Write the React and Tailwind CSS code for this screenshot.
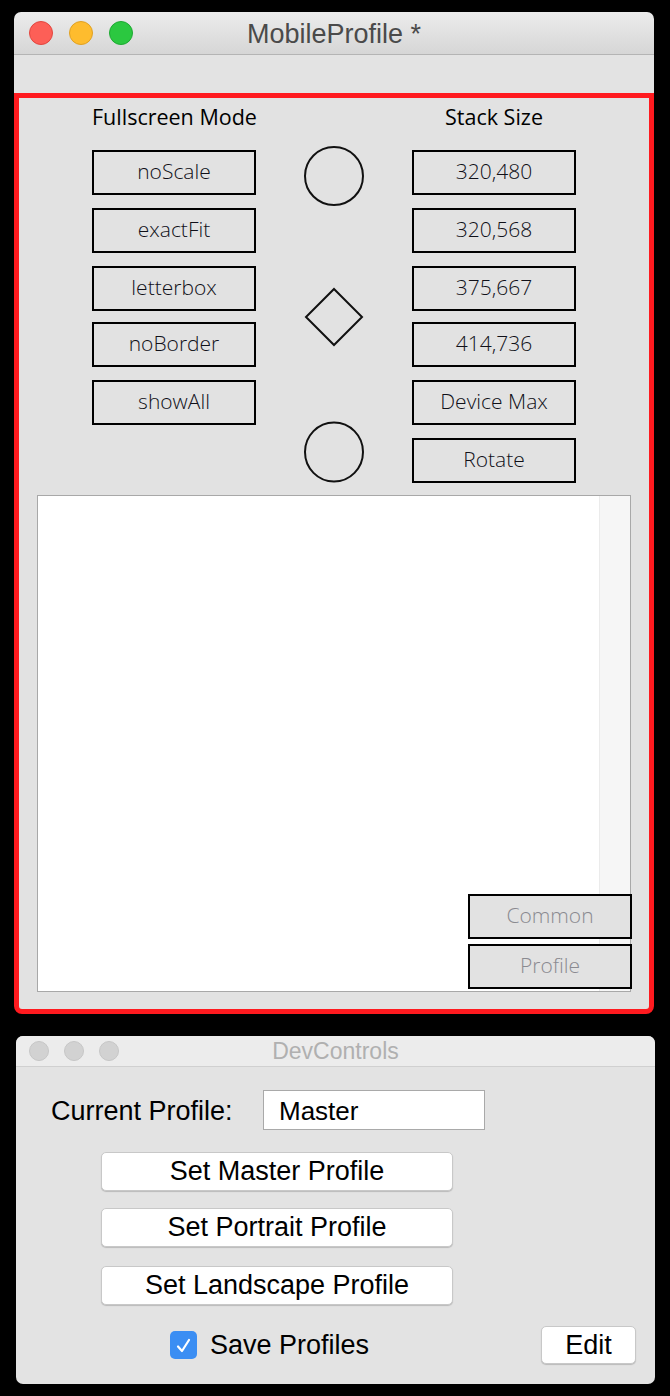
import React from 'react';

const leftModes = ['noScale', 'exactFit', 'letterbox', 'noBorder', 'showAll'];
const stackSizes = ['320,480', '320,568', '375,667', '414,736', 'Device Max', 'Rotate'];
const gaps = ['mt-0', 'mt-[13px]', 'mt-[13px]', 'mt-[11px]', 'mt-[13px]', 'mt-[13px]'];

const FlashButton = ({ label, className = '' }) => (
  <div
    className={`h-[45px] w-[164px] border-2 border-black flex items-center justify-center pb-[2px] text-[21px] font-light text-[#101018] ${className}`}
  >
    {label}
  </div>
);

const MacButton = ({ label, className = '' }) => (
  <div
    className={`bg-white rounded-[5px] border border-[#c8c8c8] shadow-[0_1px_1px_rgba(0,0,0,0.18)] flex items-center justify-center text-[27px] text-black ${className}`}
  >
    {label}
  </div>
);

export default function App() {
  return (
    <div className="w-[670px] h-[1396px] bg-black overflow-hidden" style={{ fontFamily: '"Open Sans", sans-serif' }}>
      {/* MobileProfile window */}
      <div className="ml-[14px] mt-[12px] w-[640px]">
        <div className="h-[43px] rounded-t-[7px] bg-gradient-to-b from-[#ececec] to-[#d6d6d6] border-b border-[#b4b4b4] flex items-center relative">
          <div className="flex gap-[16px] pl-[15px]">
            <span className="w-[24px] h-[24px] rounded-full bg-[#fd5f57] border border-[#e2463f]" />
            <span className="w-[24px] h-[24px] rounded-full bg-[#febc2e] border border-[#e0a123]" />
            <span className="w-[24px] h-[24px] rounded-full bg-[#2bc840] border border-[#1ea932]" />
          </div>
          <div
            className="absolute inset-0 flex items-center justify-center pt-[3px] text-[27px] text-[#4a4a4a]"
            style={{ fontFamily: '"Liberation Sans", sans-serif' }}
          >
            MobileProfile *
          </div>
        </div>
        <div className="h-[38px] bg-[#e3e3e3]" />
        <div className="h-[921px] border-[5px] border-[#ff1a1f] rounded-b-[8px] bg-[#e2e2e2] flex flex-col">
          <div className="flex pl-[73px]">
            {/* left column */}
            <div className="w-[164px] flex flex-col">
              <div className="pt-[3px] h-[52px] text-center text-[21.5px] text-black whitespace-nowrap">Fullscreen Mode</div>
              {leftModes.map((m, i) => (
                <FlashButton key={m} label={m} className={gaps[i]} />
              ))}
            </div>
            {/* middle column */}
            <div className="w-[156px] flex flex-col items-center">
              <svg width="62" height="62" viewBox="0 0 62 62" className="mt-[47px]">
                <circle cx="31" cy="31" r="29" fill="none" stroke="#111" strokeWidth="2" />
              </svg>
              <svg width="60" height="60" viewBox="0 0 60 60" className="mt-[80px]">
                <polygon points="30,2 58,30 30,58 2,30" fill="none" stroke="#111" strokeWidth="2" />
              </svg>
              <svg width="62" height="62" viewBox="0 0 62 62" className="mt-[74px]">
                <ellipse cx="31" cy="31" rx="29" ry="29.5" fill="none" stroke="#111" strokeWidth="2" />
              </svg>
            </div>
            {/* right column */}
            <div className="w-[164px] flex flex-col">
              <div className="pt-[3px] h-[52px] text-center text-[21.5px] text-black whitespace-nowrap">Stack Size</div>
              {stackSizes.map((m, i) => (
                <FlashButton key={m} label={m} className={gaps[i]} />
              ))}
            </div>
          </div>
          {/* list area */}
          <div className="mx-[18px] mt-[12px] h-[497px] border border-[#a8a8a8] bg-white flex relative">
            <div className="flex-1 bg-white" />
            <div className="w-[31px] bg-[#f6f6f6] border-l border-[#ebebeb]" />
            <div className="absolute right-[-2px] bottom-[2px] flex flex-col gap-[5px]">
              <div className="h-[45px] w-[164px] border-2 border-black bg-[#e2e2e2] flex items-center justify-center pb-[2px] text-[21px] font-light text-[#8a8a90]">
                Common
              </div>
              <div className="h-[45px] w-[164px] border-2 border-black bg-[#e2e2e2] flex items-center justify-center pb-[2px] text-[21px] font-light text-[#8a8a90]">
                Profile
              </div>
            </div>
          </div>
        </div>
      </div>

      {/* DevControls window */}
      <div
        className="ml-[16px] mt-[22px] w-[639px] h-[348px] rounded-[7px] overflow-hidden bg-[#e3e3e3] flex flex-col"
        style={{ fontFamily: '"Liberation Sans", sans-serif' }}
      >
        <div className="h-[31px] bg-[#ececec] border-b border-[#d0d0d0] flex items-center relative">
          <div className="flex gap-[15px] pl-[13px]">
            <span className="w-[20px] h-[20px] rounded-full bg-[#d2d2d2] border border-[#c6c6c6]" />
            <span className="w-[20px] h-[20px] rounded-full bg-[#d2d2d2] border border-[#c6c6c6]" />
            <span className="w-[20px] h-[20px] rounded-full bg-[#d2d2d2] border border-[#c6c6c6]" />
          </div>
          <div className="absolute inset-0 flex items-center justify-center pt-[1px] text-[23px] text-[#b0b0b0]">DevControls</div>
        </div>
        <div className="flex items-center mt-[23px] h-[40px]">
          <div className="ml-[35px] w-[212px] pt-[2px] text-[27px] text-black">Current Profile:</div>
          <div className="w-[222px] h-[40px] bg-white border border-[#a9a9a9] flex items-center pl-[15px] pt-[2px] text-[26px] text-black">
            Master
          </div>
        </div>
        <MacButton label="Set Master Profile" className="ml-[85px] mt-[22px] w-[352px] h-[39px]" />
        <MacButton label="Set Portrait Profile" className="ml-[85px] mt-[17px] w-[352px] h-[39px]" />
        <MacButton label="Set Landscape Profile" className="ml-[85px] mt-[19px] w-[352px] h-[39px]" />
        <div className="flex items-center mt-[20px]">
          <div className="ml-[154px] w-[27px] h-[28px] rounded-[5px] bg-[#3b8ef3] flex items-center justify-center">
            <svg width="17" height="17" viewBox="0 0 17 17">
              <path d="M3 9.5 L7 14 L14 3" fill="none" stroke="white" strokeWidth="2.2" strokeLinecap="round" strokeLinejoin="round" />
            </svg>
          </div>
          <div className="ml-[13px] text-[27px] text-black">Save Profiles</div>
          <MacButton label="Edit" className="ml-auto mr-[19px] w-[95px] h-[38px] text-[26px]" />
        </div>
      </div>
    </div>
  );
}
